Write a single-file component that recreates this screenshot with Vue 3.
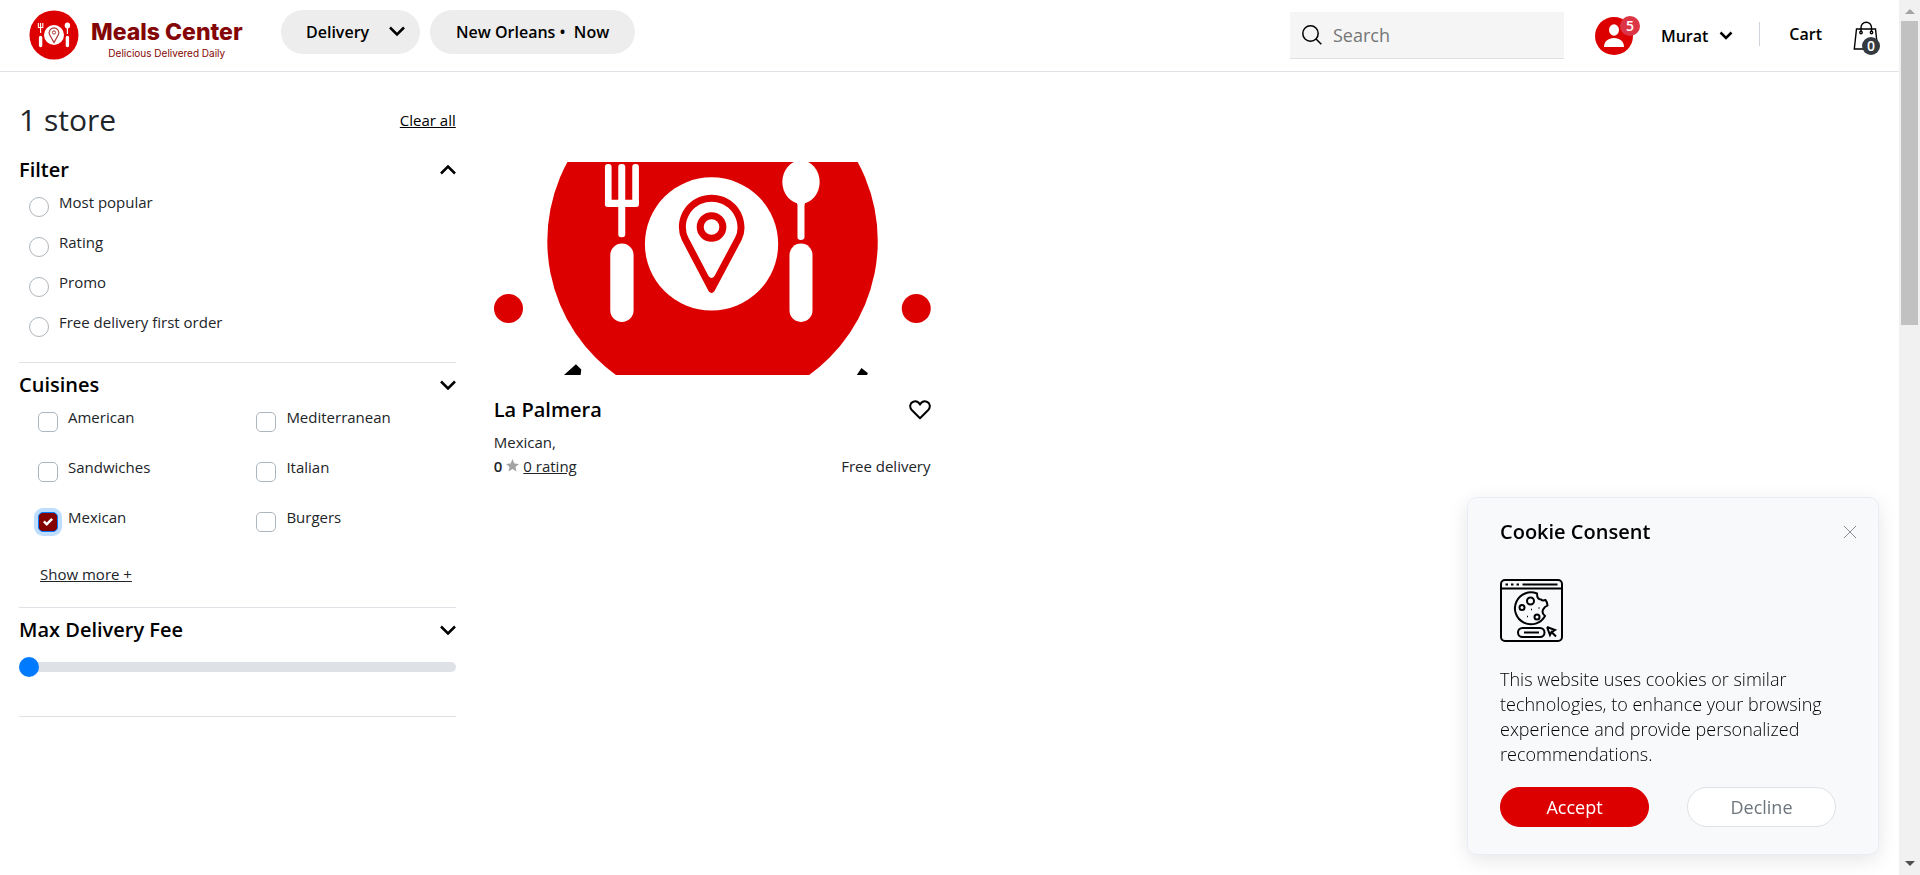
<script setup>
import { ref } from 'vue'

const mode = ref('Delivery')
const query = ref('')
const sort = ref('')
const sorts = ['Most popular', 'Rating', 'Promo', 'Free delivery first order']
const cuisines = ['American', 'Mediterranean', 'Sandwiches', 'Italian', 'Mexican', 'Burgers']
const picked = ref(['Mexican'])
const fee = ref(0)
const consentOpen = ref(true)
</script>

<template>
  <div class="page">
    <header class="topbar">
      <a href="#" class="brand">
        <svg class="brand-mark" viewBox="0 0 50 50" aria-hidden="true">
          <circle cx="25" cy="25" r="24.5" fill="#dd0000" />
          <circle cx="25" cy="25" r="10" fill="#fff" />
          <path d="M25 32.5 L20.8 25 A4.8 4.8 0 1 1 29.2 25 Z" fill="none" stroke="#b03030" stroke-width="1.2" />
          <circle cx="25" cy="22.5" r="1.6" fill="none" stroke="#b03030" stroke-width="1" />
          <path d="M9.4 13v4.5h4.4V13M11.6 13v10" fill="none" stroke="#fff" stroke-width="1.1" />
          <path d="M11.6 27.5v8M38.4 27.5v8" stroke="#fff" stroke-width="3.4" stroke-linecap="round" />
          <path d="M38.4 17v7" stroke="#fff" stroke-width="1.2" />
          <ellipse cx="38.4" cy="15.5" rx="2.7" ry="3" fill="#fff" />
        </svg>
        <span class="brand-text">
          <span class="brand-name">Meals Center</span>
          <span class="brand-tag">Delicious Delivered Daily</span>
        </span>
      </a>

      <div class="pills">
        <div class="pill-select">
          <select v-model="mode" class="pill" aria-label="Order type">
            <option>Delivery</option>
            <option>Pickup</option>
          </select>
          <svg class="pill-arrow" viewBox="0 0 16 11" aria-hidden="true"><path d="M1 1.5l7 7 7-7" /></svg>
        </div>
        <button type="button" class="pill">New Orleans •&nbsp; Now</button>
      </div>

      <label class="search">
        <svg viewBox="0 0 20 20" aria-hidden="true">
          <circle cx="8.5" cy="8.5" r="7.7" /><path d="M14 14l5.3 5.3" />
        </svg>
        <input v-model="query" type="text" placeholder="Search" aria-label="Search" />
      </label>

      <button type="button" class="avatar" aria-label="Notifications">
        <svg viewBox="0 0 38 38" aria-hidden="true">
          <circle cx="19" cy="19" r="19" fill="#dd0000" />
          <ellipse cx="19" cy="13" rx="5" ry="5.8" fill="#fff" />
          <path d="M9 30c0-5.500 4-9 10-9s10 3.500 10 9z" fill="#fff" />
        </svg>
        <span class="avatar-badge">5</span>
      </button>
      <button type="button" class="user">
        Murat
        <svg viewBox="0 0 14 10" aria-hidden="true"><path d="M1.500 1.500l5.500 5.500 5.500-5.500" /></svg>
      </button>
      <span class="rule"></span>
      <a href="#" class="cart">Cart</a>
      <a href="#" class="bag" aria-label="Shopping bag">
        <svg viewBox="0 0 26 30" aria-hidden="true">
          <path d="M3.500 8h19l2.200 20H1.300z" />
          <path d="M8 11V6.500a5 5 0 0 1 10.500 0V11" />
          <circle cx="8" cy="11.500" r="1.200" /><circle cx="18.500" cy="11.500" r="1.200" />
        </svg>
        <span class="bag-badge">0</span>
      </a>
    </header>

    <main class="content">
      <aside class="filters">
        <div class="summary">
          <h1>1 store</h1>
          <a href="#">Clear all</a>
        </div>

        <section class="group group-sort">
          <button type="button" class="group-head">
            Filter
            <svg viewBox="0 0 16 10" aria-hidden="true"><path d="M1 8.500l7-7 7 7" /></svg>
          </button>
          <div class="sorts">
            <label v-for="s in sorts" :key="s" class="choice">
              <input v-model="sort" type="radio" name="sort" :value="s" />
              <span>{{ s }}</span>
            </label>
          </div>
        </section>

        <section class="group group-cuisines">
          <button type="button" class="group-head">
            Cuisines
            <svg viewBox="0 0 16 10" aria-hidden="true"><path d="M1 1.500l7 7 7-7" /></svg>
          </button>
          <div class="cuisines">
            <label v-for="c in cuisines" :key="c" class="choice">
              <span class="box">
                <input v-model="picked" type="checkbox" :value="c" />
                <svg v-if="picked.includes(c)" viewBox="0 0 8 8" aria-hidden="true">
                  <path d="M6.564.75l-3.590 3.612-1.538-1.550L0 4.260 2.974 7.250 8 2.193z" />
                </svg>
              </span>
              <span>{{ c }}</span>
            </label>
          </div>
          <a href="#" class="more">Show more +</a>
        </section>

        <section class="group group-fee">
          <button type="button" class="group-head">
            Max Delivery Fee
            <svg viewBox="0 0 16 10" aria-hidden="true"><path d="M1 1.500l7 7 7-7" /></svg>
          </button>
          <input v-model="fee" type="range" min="0" max="20" class="slider" aria-label="Max Delivery Fee" />
        </section>
      </aside>

      <article class="store">
        <svg class="store-image" viewBox="42 36 1311 639" role="img" aria-label="La Palmera logo">
          <circle cx="698" cy="273" r="496" fill="#dd0000" />
          <circle cx="695" cy="282" r="200" fill="#fff" />
          <g fill="#fff">
            <rect x="375" y="42" width="20" height="124" rx="9" />
            <rect x="415" y="42" width="21" height="220" rx="9" />
            <rect x="457" y="42" width="20" height="124" rx="9" />
            <rect x="375" y="149" width="102" height="22" rx="8" />
            <rect x="391" y="281" width="70" height="235" rx="35" />
            <rect x="929" y="281" width="69" height="235" rx="34" />
            <path d="M945 155q8 2 8 10v97q0 8 10 8t11-8v-97q0-8 8-10z" />
            <ellipse cx="963.500" cy="96" rx="56" ry="65" />
          </g>
          <path d="M695 134.500C751 134.500 794 178 794 233Q794 252 785 271L704 423Q695 435 686 423L606 271Q597 252 597 233C597 178 640 134.500 695 134.500zM695 155.500C652 155.500 618 190 618 233Q618 248 625 262L686 378Q695 390 704 378L766 262Q773 248 773 233C773 190 738 155.500 695 155.500z" fill="#dd0000" fill-rule="evenodd" />
          <circle cx="695" cy="231" r="34" fill="none" stroke="#dd0000" stroke-width="21" />
          <circle cx="85.500" cy="476" r="43.500" fill="#dd0000" />
          <circle cx="1309.500" cy="476" r="43.500" fill="#dd0000" />
          <path d="M252 675l36-32 16 16-2 16zM1131 675l14-21 19 15-2 6z" />
        </svg>
        <div class="store-row store-title">
          <h2>La Palmera</h2>
          <button type="button" class="heart" aria-label="Save store">
            <svg viewBox="0 0 22 20" aria-hidden="true">
              <path d="M11 18.300L3 10.300C0 7 1 2.800 4.300 1.700 7 .8 9.700 2.300 11 4.600 12.300 2.300 15 .8 17.700 1.700 21 2.800 22 7 19 10.300z" />
            </svg>
          </button>
        </div>
        <p class="store-kind">Mexican,</p>
        <div class="store-row store-meta">
          <span class="rating">
            <b>0</b>
            <svg viewBox="0 0 24 24" aria-hidden="true"><path d="M12 0l3.400 8.300L24 9l-6.600 5.600L19.500 23 12 18.400 4.500 23l2.100-8.400L0 9l8.600-.7z" /></svg>
            <a href="#">0 rating</a>
          </span>
          <span>Free delivery</span>
        </div>
      </article>
    </main>

    <section v-if="consentOpen" class="consent" aria-label="Cookie Consent">
      <div class="consent-head">
        <h2>Cookie Consent</h2>
        <button type="button" aria-label="Close" @click="consentOpen = false">
          <svg viewBox="0 0 14 14" aria-hidden="true"><path d="M1 1l12 12M13 1L1 13" /></svg>
        </button>
      </div>
      <svg class="cookie" viewBox="0 0 63 63" aria-hidden="true">
        <rect x="1" y="1" width="61" height="61" rx="4" />
        <path d="M1 9.500h61M5.500 5.500h2.500M11 5.500h2.500M16.500 5.500h2.500M22.500 5.500h35" />
        <path d="M37 14.500a16 16 0 1 0 8 22.500q-5-4 0-9l2.500-1.500q-.5-4-2-5.500-3 1-4.500-.5-4 0-4-6z" />
        <circle cx="30.500" cy="22" r="3.500" /><circle cx="22" cy="28.500" r="2.500" /><circle cx="37" cy="38" r="2.500" />
        <path d="M31 30.500h1M38.500 29h1M27 37.500h1" stroke-width="1.400" />
        <rect x="18" y="49" width="26.500" height="9" rx="4.500" />
        <path d="M24 53.500h15" />
        <path d="M47 48l3 8 1.500-3 4.500 4.500M47 48l8 3-3 2" />
      </svg>
      <p>This website uses cookies or similar technologies, to enhance your browsing experience and provide personalized recommendations.</p>
      <div class="consent-actions">
        <button type="button" class="accept" @click="consentOpen = false">Accept</button>
        <button type="button" class="decline" @click="consentOpen = false">Decline</button>
      </div>
    </section>

    <div class="scrollbar" aria-hidden="true">
      <svg viewBox="0 0 10 5"><path d="M0 5l5-5 5 5z" fill="#a3a3a3" /></svg>
      <div class="thumb"></div>
      <svg viewBox="0 0 10 5"><path d="M0 0l5 5 5-5z" fill="#505050" /></svg>
    </div>
  </div>
</template>

<style>
body {
  margin: 0;
  background: #fff;
}
</style>

<style scoped>
.page {
  min-height: 100vh;
  padding-right: 21px;
  box-sizing: border-box;
  font-family: "Open Sans", "Noto Sans", sans-serif;
  font-size: 15px;
  line-height: 24px;
  color: #212529;
}
.page *,
.page *::before {
  box-sizing: border-box;
}
svg {
  display: block;
  flex: none;
}
button,
select,
input {
  font: inherit;
  color: inherit;
  margin: 0;
}
button {
  padding: 0;
  border: 0;
  background: none;
  cursor: pointer;
}
a {
  color: inherit;
}
h1,
h2,
p {
  margin: 0;
}

.topbar {
  display: flex;
  align-items: center;
  height: 72px;
  padding: 0 20px 0 29px;
  border-bottom: 1px solid #dee2e6;
  color: #000;
  font-size: 16px;
  font-weight: 600;
}
.brand {
  display: flex;
  gap: 12px;
  width: 252px;
  text-decoration: none;
  color: #840606;
  font-family: Inter, "Open Sans", sans-serif;
}
.brand-mark {
  width: 50px;
  height: 50px;
}
.brand-text {
  display: flex;
  flex-direction: column;
  align-items: center;
  padding-top: 9px;
  white-space: nowrap;
}
.brand-name {
  font-size: 23px;
  line-height: 26px;
  font-weight: 800;
}
.brand-tag {
  font-size: 10px;
  line-height: 16px;
  font-weight: 400;
}
.pills {
  display: flex;
  gap: 10px;
  align-self: flex-start;
  padding-top: 10px;
}
.pill-select {
  position: relative;
}
.pill {
  height: 44px;
  padding: 0 26px;
  border: 0;
  border-radius: 22px;
  background: #ededed;
  white-space: nowrap;
}
select.pill {
  width: 139px;
  padding-left: 25px;
  appearance: none;
}
.pill-arrow {
  position: absolute;
  right: 15px;
  top: 16px;
  width: 16px;
  height: 11px;
  pointer-events: none;
}
.pill-arrow path,
.group-head path,
.user path {
  fill: none;
  stroke: #000;
  stroke-width: 2.5;
}
.search {
  display: flex;
  align-items: center;
  gap: 11px;
  width: 274px;
  height: 47px;
  margin-left: auto;
  padding: 0 12px;
  background: #f5f5f5;
  border-bottom: 1px solid #dee2e6;
}
.search svg {
  width: 20px;
  height: 20px;
  fill: none;
  stroke: #000;
  stroke-width: 1.5;
}
.search input {
  flex: 1;
  min-width: 0;
  padding: 0;
  border: 0;
  outline: 0;
  background: none;
  font-size: 18px;
  font-weight: 400;
}
.search input::placeholder {
  color: #757575;
}
.avatar {
  position: relative;
  margin-left: 31px;
}
.avatar svg {
  width: 38px;
  height: 38px;
}
.avatar-badge,
.bag-badge {
  position: absolute;
  display: grid;
  place-items: center;
  border-radius: 50%;
  color: #fff;
  font-size: 14px;
  line-height: 18px;
  font-weight: 600;
}
.avatar-badge {
  right: -7px;
  top: -1px;
  width: 20px;
  height: 20px;
  background: #dc3545;
}
.user {
  display: flex;
  align-items: center;
  gap: 11px;
  margin-left: 28px;
}
.user svg {
  width: 14px;
  height: 10px;
}
.rule {
  width: 1px;
  height: 24px;
  margin-left: 26px;
  margin-bottom: 4px;
  background: #ced4da;
}
.cart {
  margin-left: 29px;
  margin-bottom: 4px;
  text-decoration: none;
}
.bag {
  position: relative;
  margin-left: 31px;
}
.bag svg {
  width: 26px;
  height: 30px;
  fill: none;
  stroke: #000;
  stroke-width: 1.4;
}
.bag-badge {
  right: -1px;
  bottom: -4px;
  width: 18px;
  height: 18px;
  background: #343a40;
}

.content {
  display: grid;
  grid-template-columns: repeat(4, 1fr);
  gap: 38px;
  padding: 29px 19px;
}
.summary {
  display: flex;
  justify-content: space-between;
  align-items: center;
  height: 38px;
}
.summary h1 {
  font-size: 30px;
  font-weight: 400;
}
.summary a {
  color: #000;
}
.group {
  border-bottom: 1px solid #dee2e6;
}
.group-head {
  display: flex;
  justify-content: space-between;
  align-items: center;
  width: 100%;
  height: 44px;
  color: #000;
  font-size: 20px;
  font-weight: 600;
}
.group-head svg {
  width: 16px;
  height: 10px;
}
.group-sort {
  height: 215px;
  margin-top: 9px;
}
.group-cuisines {
  height: 245px;
}
.group-fee {
  height: 109px;
}
.choice {
  display: flex;
  align-items: flex-start;
  gap: 10px;
}
.choice input {
  appearance: none;
  display: block;
  width: 20px;
  height: 20px;
  border: 1px solid #adb5bd;
  background: #fff;
}
.sorts {
  display: grid;
  grid-auto-rows: 40px;
  padding-left: 10px;
  margin-top: -2px;
}
.sorts input {
  margin-top: 7px;
  border-radius: 50%;
}
.sorts input:checked {
  border: 6px solid #840000;
}
.cuisines {
  display: grid;
  grid-template-columns: repeat(2, 1fr);
  grid-auto-rows: 50px;
  margin-top: -2px;
}
.cuisines .choice {
  padding-left: 19px;
}
.box {
  display: grid;
  margin-top: 7px;
}
.box > * {
  grid-area: 1 / 1;
}
.box input {
  border-radius: 5px;
}
.box input:checked {
  border-color: #007bff;
  background: #840000;
  box-shadow: 0 0 0 4px #bfdeff;
}
.box svg {
  width: 10px;
  height: 10px;
  place-self: center;
  fill: #fff;
  pointer-events: none;
}
.more {
  display: inline-block;
  margin: 7px 0 0 21px;
}
.slider {
  display: block;
  width: 100%;
  height: 20px;
  margin-top: 5px;
  appearance: none;
  background: none;
}
.slider::-webkit-slider-runnable-track {
  height: 10px;
  border-radius: 5px;
  background: #dee2e6;
}
.slider::-webkit-slider-thumb {
  appearance: none;
  width: 20px;
  height: 20px;
  margin-top: -5px;
  border-radius: 50%;
  background: #007bff;
}

.store {
  padding-top: 61px;
}
.store-image {
  width: 100%;
}
.store-row {
  display: flex;
  justify-content: space-between;
  align-items: center;
}
.store-title {
  margin-top: 22px;
  color: #000;
}
.store-title h2 {
  font-size: 20px;
  line-height: 26px;
  font-weight: 600;
}
.heart svg {
  width: 22px;
  height: 20px;
  fill: none;
  stroke: #000;
  stroke-width: 2;
  stroke-linejoin: round;
}
.store-kind {
  margin-top: 7px;
}
.rating {
  display: flex;
  align-items: center;
  gap: 4px;
}
.rating b {
  font-weight: 600;
}
.rating svg {
  width: 13px;
  height: 13px;
  fill: #a3a3a3;
}

.consent {
  position: fixed;
  right: 41px;
  bottom: 20px;
  width: 412px;
  padding: 19px 21px 27px 32px;
  border: 1px solid #e9ecf5;
  border-radius: 10px;
  background: #f7f9fb;
  box-shadow: 0 5px 20px rgba(0, 0, 0, 0.1);
}
.consent-head {
  display: flex;
  justify-content: space-between;
  align-items: center;
}
.consent-head h2 {
  color: #000;
  font-size: 20px;
  line-height: 30px;
  font-weight: 600;
}
.consent-head svg {
  width: 14px;
  height: 14px;
  fill: none;
  stroke: #8a8d91;
}
.cookie {
  width: 63px;
  height: 63px;
  margin-top: 32px;
  fill: none;
  stroke: #000;
  stroke-width: 2;
}
.consent p {
  width: 340px;
  margin-top: 25px;
  font-size: 18px;
  line-height: 25px;
  font-weight: 300;
  color: #000;
}
.consent-actions {
  display: flex;
  gap: 38px;
  margin-top: 20px;
}
.consent-actions button {
  width: 149px;
  height: 40px;
  border: 1px solid #dd0000;
  border-radius: 20px;
  font-size: 18px;
}
.consent-actions .accept {
  background: #dd0000;
  color: #fff;
}
.consent-actions .decline {
  border-color: #dee2e6;
  background: #fff;
  color: #6c757d;
}

.scrollbar {
  position: fixed;
  inset: 0 0 0 auto;
  display: flex;
  flex-direction: column;
  align-items: center;
  width: 21px;
  padding: 9px 0;
  background: #f1f1f1;
}
.scrollbar svg {
  width: 10px;
  height: 5px;
}
.thumb {
  width: 17px;
  height: 35.5%;
  margin: 7px 0 auto;
  background: #c1c1c1;
}
</style>
